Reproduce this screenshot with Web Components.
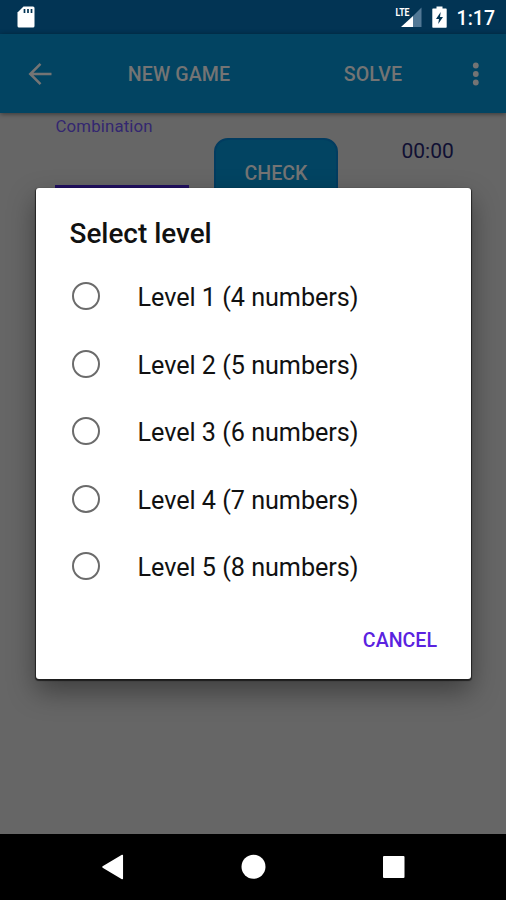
<!DOCTYPE html>
<html lang="en">
<head>
<meta charset="utf-8">
<title>Select level</title>
<style>
html,body{margin:0;height:100%;overflow:hidden;background:#666}
body{font-family:Roboto,"Liberation Sans",sans-serif}
</style>
</head>
<body>
<game-screen>
  <status-bar time="1:17"></status-bar>
  <app-toolbar><span slot="new">NEW GAME</span><span slot="solve">SOLVE</span></app-toolbar>
  <game-panel label="Combination" time="00:00">CHECK</game-panel>
  <nav-bar slot="nav"></nav-bar>
  <level-dialog slot="dialog">
    <span slot="title">Select level</span>
    <level-option>Level 1 (4 numbers)</level-option>
    <level-option>Level 2 (5 numbers)</level-option>
    <level-option>Level 3 (6 numbers)</level-option>
    <level-option>Level 4 (7 numbers)</level-option>
    <level-option>Level 5 (8 numbers)</level-option>
    <span slot="action">CANCEL</span>
  </level-dialog>
</game-screen>
<script>
const define = (name, markup) => customElements.define(name, class extends HTMLElement {
  constructor() {
    super();
    this.attachShadow({mode: 'open'}).innerHTML = markup;
  }
  connectedCallback() {
    this.shadowRoot.querySelectorAll('[data-attr]').forEach(el => {
      el.textContent = this.getAttribute(el.dataset.attr);
    });
  }
});

define('game-screen', `
<style>
:host{display:flex;flex-direction:column;position:relative;width:506px;height:900px;overflow:hidden;background:#666}
main{flex:1;display:flex;flex-direction:column;min-height:0}
</style>
<main><slot></slot></main><slot name="nav"></slot><slot name="dialog"></slot>`);

define('status-bar', `
<style>
:host{display:flex;align-items:center;height:34px;flex:none;box-sizing:border-box;padding:0 11px 0 17px;background:#023454;color:#fff}
svg{display:block;flex:none}
.sd{margin-right:auto}
.cell{margin-right:10px}
.bat{margin-right:10px}
time{font-size:19.500px;font-weight:500;line-height:34px;margin-top:3px}
</style>
<svg class="sd" width="18" height="22" viewBox="0 0 18 22"><path d="M6.500 .5H16a1.500 1.500 0 0 1 1.500 1.500V20a1.500 1.500 0 0 1-1.500 1.500H2A1.500 1.500 0 0 1 .5 20V6.500z" fill="#fff"/><path d="M7.500 3v4M11 3v4M14.500 3v4" stroke="#023454" stroke-width="1.700"/></svg>
<svg class="cell" width="27" height="22" viewBox="0 0 27 22"><path d="M26.500 1.500V21H18V10z" fill="#527895"/><path d="M18 10v11H6z" fill="#fff"/><text x="0.500" y="10" textLength="14" lengthAdjust="spacingAndGlyphs" font-size="11.500" font-weight="700" fill="#fff">LTE</text></svg>
<svg class="bat" width="15" height="22" viewBox="0 0 15 22"><path d="M4.500 .5h6v2H14q.7 0 .7.800V21q0 .7-.7.700H1q-.7 0-.7-.7V3.300q0-.8.700-.8h3.500z" fill="#fff"/><path d="M8.700 6L4 13h3L6.200 18 11 11H8z" fill="#023454"/></svg>
<time data-attr="time"></time>`);

define('app-toolbar', `
<style>
:host{display:grid;grid-template-columns:80px 198px 190px 38px;align-items:center;height:79px;flex:none;background:#024462;color:#747474;font-size:19.600px;font-weight:500;box-shadow:0 1px 5px #0007;z-index:1}
svg{display:block}
.back{margin-left:28px}
.cell{text-align:center;line-height:24px;padding-top:3px;letter-spacing:.1px}
.more{margin-left:3px}
</style>
<svg class="back" width="24" height="24" viewBox="0 0 24 24"><path d="M23.500 12H3M12.500 1.800L2.300 12l10.200 10.200" fill="none" stroke="#747474" stroke-width="2.600"/></svg>
<div class="cell"><slot name="new"></slot></div>
<div class="cell"><slot name="solve"></slot></div>
<svg class="more" width="10" height="24" viewBox="0 0 10 24"><g fill="#747474"><circle cx="4.800" cy="3.500" r="2.900"/><circle cx="4.800" cy="12" r="2.900"/><circle cx="4.800" cy="20.500" r="2.900"/></g></svg>`);

define('game-panel', `
<style>
:host{display:grid;grid-template-columns:134px 124px 53px;column-gap:25px;align-items:start;padding-left:55px;height:120px;flex:none;background:#666}
.field{box-sizing:border-box;height:75px;border-bottom:3px solid #200f60;color:#332770;font-size:16.800px;line-height:20px;padding-top:3px;letter-spacing:.15px;text-indent:.5px}
.btn{box-sizing:border-box;height:68px;margin-top:25px;border:2px solid #023c60;border-radius:14px;background:#024462;color:#747474;font-size:19.600px;font-weight:500;text-align:center;line-height:67px}
time{font-size:21px;line-height:26px;color:#101033;margin:25px 0 0 38.500px}
</style>
<div class="field" data-attr="label"></div><div class="btn"><slot></slot></div><time data-attr="time"></time>`);

define('level-dialog', `
<style>
:host{position:absolute;left:36px;top:188px;width:435px;height:491px;z-index:2;box-sizing:border-box;display:flex;flex-direction:column;background:#fff;border-radius:3px;color:#111;box-shadow:0 1px 1px 1px #0009,0 12px 28px #0006}
h1{margin:0;padding:26px 0 0 33.500px;font-size:27.900px;font-weight:500;line-height:40px;height:76px;box-sizing:border-box}
.list{display:flex;flex-direction:column}
.action{margin:auto 34px 26px auto;color:#5a22e0;font-size:19.600px;font-weight:500;line-height:24px}
</style>
<h1><slot name="title"></slot></h1><div class="list"><slot></slot></div><div class="action"><slot name="action"></slot></div>`);

define('level-option', `
<style>
:host{display:grid;grid-template-columns:65.500px 1fr;align-items:center;height:67.500px;padding-left:36px;font-size:25.200px;line-height:32px;color:#111}
i{display:block;box-sizing:border-box;width:28px;height:28px;border:2.600px solid #6b6b6b;border-radius:50%;margin-top:-3px}
span{letter-spacing:-.03px;padding-top:1px}
</style>
<i></i><span><slot></slot></span>`);

define('nav-bar', `
<style>
:host{display:grid;grid-template-columns:repeat(3,1fr);width:422px;justify-items:center;align-items:center;height:66px;flex:none;background:#000;padding:0 42px}
svg{display:block}
</style>
<svg width="24" height="26" viewBox="0 0 24 26"><path d="M22.300 1.500v23L3 13z" fill="#fff" stroke="#fff" stroke-width="1.500" stroke-linejoin="round"/></svg>
<svg width="26" height="26" viewBox="0 0 26 26"><circle cx="13.500" cy="12.700" r="12" fill="#fff"/></svg>
<svg width="22" height="24" viewBox="0 0 22 24"><rect y="1" width="21.500" height="22" rx="1" fill="#fff"/></svg>`);
</script>
</body>
</html>
